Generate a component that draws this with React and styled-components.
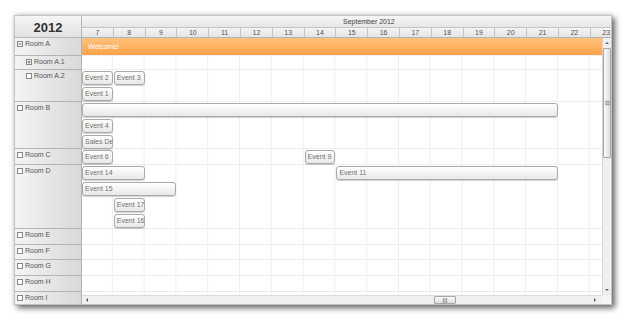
import React from 'react';
import styled, { createGlobalStyle } from 'styled-components';

const COL = 31.8;
const LINE = 16;

const GlobalStyle = createGlobalStyle`
  html, body {
    margin: 0;
    padding: 0;
    background: #ffffff;
    font-family: "Liberation Sans", Arial, sans-serif;
  }
`;

const Page = styled.div`
  width: 632px;
  height: 325px;
  padding: 15px 0 0 14px;
  box-sizing: border-box;
`;

const Frame = styled.div`
  width: 598px;
  height: 290px;
  box-sizing: border-box;
  border: 1px solid #c4c4c4;
  box-shadow: 3px 3px 6px rgba(0, 0, 0, 0.6), 0 -1px 4px rgba(0, 0, 0, 0.12);
  display: flex;
  background: #fff;
  overflow: hidden;
`;

const LeftCol = styled.div`
  width: 66px;
  flex: none;
  display: flex;
  flex-direction: column;
  border-right: 1px solid #b4b4b4;
  overflow: hidden;
`;

const Corner = styled.div`
  height: 22px;
  flex: none;
  box-sizing: border-box;
  border-bottom: 1px solid #b8b8b8;
  background: linear-gradient(#f6f6f6, #e2e2e2);
  display: flex;
  align-items: center;
  justify-content: center;
  font-size: 13px;
  font-weight: bold;
  color: #333;
  padding-top: 1px;
`;

const RowHead = styled.div`
  height: ${p => p.h}px;
  flex: none;
  box-sizing: border-box;
  border-bottom: 1px solid #b4b4b4;
  background: linear-gradient(to right, #f4f4f4, #d9d9d9);
  display: flex;
  align-items: flex-start;
  padding: 2px 0 0 ${p => 2 + p.level * 9}px;
  font-size: 7px;
  color: #555;
  gap: 2px;
  line-height: 8px;
  white-space: nowrap;
`;

const Right = styled.div`
  flex: 1;
  display: flex;
  flex-direction: column;
  min-width: 0;
`;

const HeaderArea = styled.div`
  flex: none;
  overflow: hidden;
`;

const MonthRow = styled.div`
  height: 12px;
  box-sizing: border-box;
  border-bottom: 1px solid #c4c4c4;
  background: linear-gradient(#f6f6f6, #e6e6e6);
  font-size: 7px;
  color: #444;
  line-height: 11px;
  padding-left: 261px;
  white-space: nowrap;
`;

const DayRow = styled.div`
  height: 10px;
  box-sizing: border-box;
  border-bottom: 1px solid #b4b4b4;
  display: flex;
  width: ${17 * COL}px;
`;

const DayCell = styled.div`
  width: ${COL}px;
  flex: none;
  box-sizing: border-box;
  border-right: 1px solid #c4c4c4;
  background: linear-gradient(#f4f4f4, #e4e4e4);
  text-align: center;
  font-size: 7px;
  line-height: 9px;
  color: #555;
`;

const BodyArea = styled.div`
  flex: 1;
  display: grid;
  grid-template-columns: 1fr 9px;
  grid-template-rows: 1fr 9px;
  min-height: 0;
`;

const Viewport = styled.div`
  overflow: hidden;
  display: flex;
  flex-direction: column;
`;

const GridRow = styled.div`
  height: ${p => p.h}px;
  flex: none;
  box-sizing: border-box;
  position: relative;
  border-bottom: 1px solid #ededed;
  background-image: linear-gradient(to right, transparent ${COL - 1}px, #efefef ${COL - 1}px);
  background-size: ${COL}px 100%;
  background-position: -1px 0;
`;

const Event = styled.div`
  position: absolute;
  box-sizing: border-box;
  height: 14px;
  border: 1px solid #a9a9a9;
  border-radius: 3px;
  background: linear-gradient(#ffffff, #e8e8e8);
  box-shadow: 0 1px 1px rgba(0, 0, 0, 0.18);
  font-size: 7px;
  line-height: 12px;
  color: #707070;
  padding-left: 2px;
  overflow: hidden;
  white-space: nowrap;
`;

const Welcome = styled.div`
  position: absolute;
  left: 0;
  right: 0;
  top: 0;
  bottom: 0;
  background: linear-gradient(#ffc27d, #ffa24a);
  color: #fff;
  font-size: 7px;
  line-height: 18px;
  padding-left: 6px;
`;

const VScroll = styled.div`
  position: relative;
  background: #efefef;
  border-left: 1px solid #d4d4d4;
  box-sizing: border-box;
`;

const HScroll = styled.div`
  position: relative;
  background: #efefef;
  border-top: 1px solid #dcdcdc;
  box-sizing: border-box;
`;

const ScrollCorner = styled.div`
  background: #f4f4f4;
`;

const Thumb = styled.div`
  position: absolute;
  box-sizing: border-box;
  border: 1px solid #a8a8a8;
  border-radius: 1px;
  background: ${p => (p.vertical ? 'linear-gradient(to right, #fafafa, #dedede)' : 'linear-gradient(#fafafa, #dedede)')};
  display: flex;
  align-items: center;
  justify-content: center;
`;

const Arrow = styled.div`
  position: absolute;
  width: 0;
  height: 0;
  border: 2px solid transparent;
`;

const Grip = ({ vertical }) => (
  <svg width={vertical ? 5 : 6} height={vertical ? 6 : 5} viewBox="0 0 6 6">
    {vertical
      ? [1, 3, 5].map(y => <line key={y} x1="0" x2="6" y1={y} y2={y} stroke="#888" strokeWidth="1" />)
      : [1, 3, 5].map(x => <line key={x} y1="0" y2="6" x1={x} x2={x} stroke="#888" strokeWidth="1" />)}
  </svg>
);

const TreeIcon = ({ kind }) => (
  <svg width="6" height="6" viewBox="0 0 6 6" style={{ flex: 'none', marginTop: 1 }}>
    <rect x="0.5" y="0.5" width="5" height="5" fill="#fff" stroke="#888" strokeWidth="1" />
    {kind !== 'box' && <line x1="1.5" x2="4.5" y1="3" y2="3" stroke="#666" strokeWidth="1" />}
    {kind === 'plus' && <line x1="3" x2="3" y1="1.5" y2="4.5" stroke="#666" strokeWidth="1" />}
  </svg>
);

const rows = [
  { name: 'Room A', h: 18, level: 0, icon: 'minus' },
  { name: 'Room A.1', h: 14, level: 1, icon: 'plus' },
  { name: 'Room A.2', h: 32, level: 1, icon: 'box' },
  { name: 'Room B', h: 47, level: 0, icon: 'box' },
  { name: 'Room C', h: 16, level: 0, icon: 'box' },
  { name: 'Room D', h: 64, level: 0, icon: 'box' },
  { name: 'Room E', h: 16, level: 0, icon: 'box' },
  { name: 'Room F', h: 15, level: 0, icon: 'box' },
  { name: 'Room G', h: 16, level: 0, icon: 'box' },
  { name: 'Room H', h: 16, level: 0, icon: 'box' },
  { name: 'Room I', h: 16, level: 0, icon: 'box' },
];

const events = {
  'Room A.2': [
    { text: 'Event 2', line: 0, col: 0, span: 1 },
    { text: 'Event 3', line: 0, col: 1, span: 1 },
    { text: 'Event 1', line: 1, col: 0, span: 1 },
  ],
  'Room B': [
    { text: '', line: 0, col: 0, span: 15 },
    { text: 'Event 4', line: 1, col: 0, span: 1 },
    { text: 'Sales Department', line: 2, col: 0, span: 1 },
  ],
  'Room C': [
    { text: 'Event 6', line: 0, col: 0, span: 1 },
    { text: 'Event 9', line: 0, col: 7, span: 1 },
  ],
  'Room D': [
    { text: 'Event 14', line: 0, col: 0, span: 2 },
    { text: 'Event 11', line: 0, col: 8, span: 7 },
    { text: 'Event 15', line: 1, col: 0, span: 3 },
    { text: 'Event 17', line: 2, col: 1, span: 1 },
    { text: 'Event 16', line: 3, col: 1, span: 1 },
  ],
};

const days = Array.from({ length: 17 }, (_, i) => i + 7);

export default function App() {
  return (
    <Page>
      <GlobalStyle />
      <Frame>
        <LeftCol>
          <Corner>2012</Corner>
          {rows.map(r => (
            <RowHead key={r.name} h={r.h} level={r.level}>
              <TreeIcon kind={r.icon} />
              <span>{r.name}</span>
            </RowHead>
          ))}
        </LeftCol>
        <Right>
          <HeaderArea>
            <MonthRow>September 2012</MonthRow>
            <DayRow>
              {days.map(d => (
                <DayCell key={d}>{d}</DayCell>
              ))}
            </DayRow>
          </HeaderArea>
          <BodyArea>
            <Viewport>
              {rows.map(r => (
                <GridRow key={r.name} h={r.h}>
                  {r.name === 'Room A' && <Welcome>Welcome!</Welcome>}
                  {(events[r.name] || []).map((e, i) => (
                    <Event
                      key={i}
                      style={{
                        left: e.col * COL,
                        top: 1 + e.line * LINE,
                        width: e.span * COL - 1,
                      }}
                    >
                      {e.text}
                    </Event>
                  ))}
                </GridRow>
              ))}
            </Viewport>
            <VScroll>
              <Arrow style={{ top: 2, left: 2, borderBottomColor: '#666' }} />
              <Thumb vertical style={{ top: 10, left: 0, width: 8, height: 110 }}>
                <Grip vertical />
              </Thumb>
              <Arrow style={{ bottom: 2, left: 2, borderTopColor: '#666' }} />
            </VScroll>
            <HScroll>
              <Arrow style={{ left: 2, top: 2, borderRightColor: '#555' }} />
              <Thumb style={{ left: 352, top: 0, width: 22, height: 8 }}>
                <Grip />
              </Thumb>
              <Arrow style={{ right: 4, top: 2, borderLeftColor: '#555' }} />
            </HScroll>
            <ScrollCorner />
          </BodyArea>
        </Right>
      </Frame>
    </Page>
  );
}
